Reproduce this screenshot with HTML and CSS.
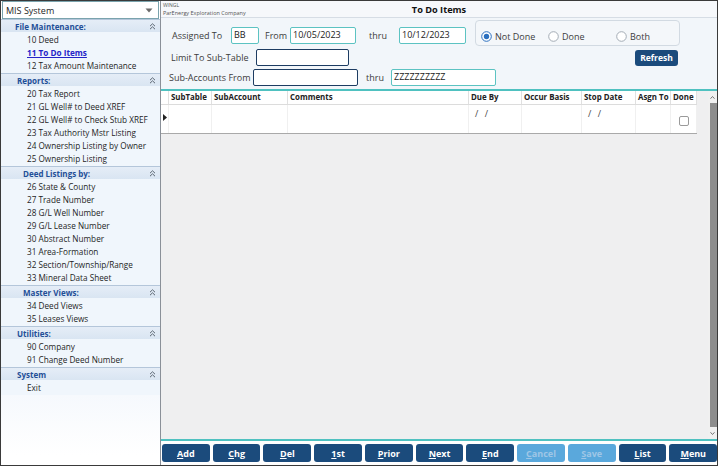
FILE: index.html
```html
<!DOCTYPE html>
<html>
<head>
<meta charset="utf-8">
<link rel="stylesheet" href="styles.css">
</head>
<body>
<aside class="sidebar">
  <div class="dropdown">
    <span>MIS System</span>
    <svg class="dd-arrow" width="8" height="5" viewBox="0 0 8 5"><path d="M0.5 0.5 L7.5 0.5 L4 4.5 Z" fill="#6b6b6b"/></svg>
  </div>
  <section class="grp">
    <div class="grp-h"><span>File Maintenance:</span><svg class="chev" width="7" height="7" viewBox="0 0 7 7"><path d="M1 3.2 L3.5 0.8 L6 3.2 M1 6.2 L3.5 3.8 L6 6.2" fill="none" stroke="#5a6470" stroke-width="1"/></svg></div>
    <ul>
      <li>10 Deed</li>
      <li class="active">11 To Do Items</li>
      <li>12 Tax Amount Maintenance</li>
    </ul>
  </section>
  <section class="grp">
    <div class="grp-h h2"><span>Reports:</span><svg class="chev" width="7" height="7" viewBox="0 0 7 7"><path d="M1 3.2 L3.5 0.8 L6 3.2 M1 6.2 L3.5 3.8 L6 6.2" fill="none" stroke="#5a6470" stroke-width="1"/></svg></div>
    <ul>
      <li>20 Tax Report</li>
      <li>21 GL Well# to Deed XREF</li>
      <li>22 GL Well# to Check Stub XREF</li>
      <li>23 Tax Authority Mstr Listing</li>
      <li>24 Ownership Listing by Owner</li>
      <li>25 Ownership Listing</li>
    </ul>
  </section>
  <section class="grp">
    <div class="grp-h sub"><span>Deed Listings by:</span><svg class="chev" width="7" height="7" viewBox="0 0 7 7"><path d="M1 3.2 L3.5 0.8 L6 3.2 M1 6.2 L3.5 3.8 L6 6.2" fill="none" stroke="#5a6470" stroke-width="1"/></svg></div>
    <ul>
      <li>26 State &amp; County</li>
      <li>27 Trade Number</li>
      <li>28 G/L Well Number</li>
      <li>29 G/L Lease Number</li>
      <li>30 Abstract Number</li>
      <li>31 Area-Formation</li>
      <li>32 Section/Township/Range</li>
      <li>33 Mineral Data Sheet</li>
    </ul>
  </section>
  <section class="grp">
    <div class="grp-h sub"><span>Master Views:</span><svg class="chev" width="7" height="7" viewBox="0 0 7 7"><path d="M1 3.2 L3.5 0.8 L6 3.2 M1 6.2 L3.5 3.8 L6 6.2" fill="none" stroke="#5a6470" stroke-width="1"/></svg></div>
    <ul>
      <li>34 Deed Views</li>
      <li>35 Leases Views</li>
    </ul>
  </section>
  <section class="grp">
    <div class="grp-h h2"><span>Utilities:</span><svg class="chev" width="7" height="7" viewBox="0 0 7 7"><path d="M1 3.2 L3.5 0.8 L6 3.2 M1 6.2 L3.5 3.8 L6 6.2" fill="none" stroke="#5a6470" stroke-width="1"/></svg></div>
    <ul>
      <li>90 Company</li>
      <li>91 Change Deed Number</li>
    </ul>
  </section>
  <section class="grp">
    <div class="grp-h h2"><span>System</span><svg class="chev" width="7" height="7" viewBox="0 0 7 7"><path d="M1 3.2 L3.5 0.8 L6 3.2 M1 6.2 L3.5 3.8 L6 6.2" fill="none" stroke="#5a6470" stroke-width="1"/></svg></div>
    <ul>
      <li>Exit</li>
    </ul>
  </section>
  <div class="side-fill"></div>
</aside>

<main class="main">
  <header class="titlebar">
    <div class="company">
      <div class="co-code">WINGL</div>
      <div class="co-name">ParEnergy Exploration Company</div>
    </div>
    <div class="title">To Do Items</div>
    <div></div>
  </header>

  <div class="filters">
    <div class="frow r1">
      <label class="lbl l-assigned">Assigned To</label>
      <div class="inp teal w-bb">BB</div>
      <label class="lbl l-from">From</label>
      <div class="inp teal w-date1">10/05/2023</div>
      <label class="lbl l-thru1">thru</label>
      <div class="inp teal w-date2">10/12/2023</div>
    </div>
    <div class="radios">
      <span class="radio r-not"><svg width="11" height="11" viewBox="0 0 11 11"><circle cx="5.5" cy="5.5" r="4.8" fill="#fff" stroke="#2a6fbf" stroke-width="1"/><circle cx="5.5" cy="5.5" r="2.7" fill="#2a6fbf"/></svg>Not Done</span>
      <span class="radio r-done"><svg width="11" height="11" viewBox="0 0 11 11"><circle cx="5.5" cy="5.5" r="4.8" fill="#fff" stroke="#a3acb5" stroke-width="1"/></svg>Done</span>
      <span class="radio r-both"><svg width="11" height="11" viewBox="0 0 11 11"><circle cx="5.5" cy="5.5" r="4.8" fill="#fff" stroke="#a3acb5" stroke-width="1"/></svg>Both</span>
    </div>
    <div class="frow r2">
      <label class="lbl l-limit">Limit To Sub-Table</label>
      <div class="inp navy w-sub"></div>
    </div>
    <div class="refresh-cell"><button class="refresh">Refresh</button></div>
    <div class="frow r3">
      <label class="lbl l-subacc">Sub-Accounts From</label>
      <div class="inp navy w-acc"></div>
      <label class="lbl l-thru2">thru</label>
      <div class="inp teal w-acc">ZZZZZZZZZZ</div>
    </div>
  </div>

  <div class="gridwrap">
    <div class="table">
      <div class="trow thead">
        <div class="c"></div>
        <div class="c">SubTable</div>
        <div class="c">SubAccount</div>
        <div class="c">Comments</div>
        <div class="c">Due By</div>
        <div class="c">Occur Basis</div>
        <div class="c">Stop Date</div>
        <div class="c">Asgn To</div>
        <div class="c">Done</div>
      </div>
      <div class="trow tdata">
        <div class="c ind"><svg width="4" height="7" viewBox="0 0 4 7"><path d="M0 0 L4 3.5 L0 7 Z" fill="#222"/></svg></div>
        <div class="c"></div>
        <div class="c"></div>
        <div class="c"></div>
        <div class="c date">/ /</div>
        <div class="c"></div>
        <div class="c date">/ /</div>
        <div class="c"></div>
        <div class="c chk"><span class="cb"></span></div>
      </div>
    </div>
    <div class="gap-fill"></div>
    <div class="vscroll">
      <div class="sb-arrow"><svg width="5" height="3" viewBox="0 0 5 3"><path d="M0.5 2.7 L2.5 0.5 L4.5 2.7" fill="none" stroke="#666" stroke-width="0.9"/></svg></div>
      <div class="sb-thumb"></div>
      <div class="sb-arrow down"><svg width="5" height="3" viewBox="0 0 5 3"><path d="M0.5 0.3 L2.5 2.5 L4.5 0.3" fill="none" stroke="#666" stroke-width="0.9"/></svg></div>
    </div>
  </div>

  <footer class="buttons">
    <button class="btn"><u>A</u>dd</button>
    <button class="btn"><u>C</u>hg</button>
    <button class="btn"><u>D</u>el</button>
    <button class="btn"><u>1</u>st</button>
    <button class="btn"><u>P</u>rior</button>
    <button class="btn"><u>N</u>ext</button>
    <button class="btn"><u>E</u>nd</button>
    <button class="btn disabled"><u>C</u>ancel</button>
    <button class="btn disabled"><u>S</u>ave</button>
    <button class="btn"><u>L</u>ist</button>
    <button class="btn"><u>M</u>enu</button>
  </footer>
</main>
</body>
</html>
```
FILE: styles.css
```css
* { box-sizing: border-box; margin: 0; padding: 0; }
html, body { width: 718px; height: 466px; overflow: hidden; }
body {
  border: 1px solid #3a3a3a;
  display: flex;
  font-family: "Open Sans", "Noto Sans", sans-serif;
  color: #222;
  background: #fff;
}

/* Sidebar */
.sidebar {
  width: 160px;
  border-right: 1px solid #8a9098;
  display: flex;
  flex-direction: column;
  background: #fff;
}
.dropdown {
  height: 18px;
  margin: 0 1px;
  border: 1px solid #7aa3ad;
  background: #fff;
  display: flex;
  align-items: center;
  justify-content: space-between;
  padding: 0 5px 0 3px;
  font-size: 9px;
  color: #1e1e1e;
}
.dd-arrow { display: block; }
.grp-h {
  height: 13px;
  border-top: 1px solid #b4c6da;
  background: linear-gradient(#e5edf7, #d9e5f2);
  display: flex;
  align-items: center;
  justify-content: space-between;
  padding: 0 4px 0 14px;
  font-size: 8px;
  font-weight: 700;
  color: #1f4f98;
}
.grp-h.h2 { padding-left: 16px; }
.grp-h.sub { padding-left: 22px; }
.chev { display: block; }
.grp ul {
  list-style: none;
  background: #f0f6fc;
  padding: 1px 0 1px;
}
.grp li {
  height: 13px;
  line-height: 13px;
  padding-left: 26px;
  font-size: 8.2px;
  color: #1e1e1e;
  white-space: nowrap;
}
.grp li.active {
  color: #2424c8;
  font-weight: 700;
  text-decoration: underline;
}
.side-fill { flex: 1; background: linear-gradient(#f6f9fd, #fff 60px); }

/* Main */
.main {
  flex: 1;
  display: flex;
  flex-direction: column;
  background: #f2f6fa;
  min-width: 0;
}
.titlebar {
  height: 17px;
  border-bottom: 1px solid #d6dde5;
  background: #f6f8fb;
  display: grid;
  grid-template-columns: 1fr auto 1fr;
  align-items: center;
}
.company { padding-left: 2px; color: #555; line-height: 6px; }
.co-code { font-size: 5px; }
.co-name { font-size: 5.5px; margin-top: 2px; }
.title { font-size: 9.2px; font-weight: 700; color: #111; }

.filters {
  display: grid;
  grid-template-columns: 306px 1fr;
  grid-template-rows: 26px 17px 17px;
  row-gap: 3px;
  padding: 2px 0 3px 8px;
}
.frow { display: flex; align-items: center; }
.r1 { grid-column: 1; grid-row: 1; align-items: flex-end; padding-bottom: 2px; }
.r2 { grid-column: 1; grid-row: 2; }
.r3 { grid-column: 1 / 3; grid-row: 3; }
.lbl { font-size: 9px; color: #3c3c3c; white-space: nowrap; }
.r1 .lbl { height: 17px; line-height: 17px; }
.l-assigned { margin-left: 3px; width: 59px; }
.l-from { margin-left: 6px; width: 25px; }
.l-thru1 { margin-left: 13px; width: 30px; }
.l-limit { margin-left: 2px; width: 85px; }
.l-subacc { width: 84px; }
.l-thru2 { margin-left: 8px; width: 25px; }
.inp {
  height: 17px;
  background: #fff;
  border-radius: 2px;
  font-size: 9px;
  line-height: 14px;
  padding-left: 2px;
  color: #1a1a1a;
}
.inp.teal { border: 1.5px solid #5cc3c2; }
.inp.navy { border: 1.5px solid #1d3c62; }
.w-bb { width: 28px; }
.w-date1 { width: 66px; }
.w-date2 { width: 67px; }
.w-sub { width: 93px; }
.w-acc { width: 105px; }

.radios {
  grid-column: 2;
  grid-row: 1;
  width: 205px;
  border: 1px solid #d2dae2;
  border-radius: 4px;
  background: #f4f7fa;
  display: flex;
  align-items: center;
  padding: 6px 0 0 5px;
  font-size: 9px;
  color: #3c3c3c;
}
.radio { display: flex; align-items: center; gap: 3px; }
.radio svg { display: block; }
.r-not { width: 67px; }
.r-done { width: 68px; }
.refresh-cell { grid-column: 2; grid-row: 2; display: flex; align-items: center; }
.refresh {
  margin-left: 160px;
  width: 43px;
  height: 16px;
  border: none;
  border-radius: 3px;
  background: #1b4b7c;
  color: #fff;
  font-family: inherit;
  font-size: 8.5px;
  font-weight: 700;
}

/* Grid */
.gridwrap {
  flex: 1;
  display: flex;
  background: #efeff0;
  border-top: 2px solid #4fc1c0;
  border-bottom: 2px solid #4fc1c0;
  min-height: 0;
}
.table { width: 536px; align-self: flex-start; }
.trow {
  display: grid;
  grid-template-columns: 8px 43px 76px 181px 53px 60px 54px 35px 26px;
  background: #fff;
}
.thead { height: 14px; border-bottom: 1px solid #dcdcdc; }
.thead .c {
  border-right: 1px solid #e0e0e0;
  font-size: 7.9px;
  font-weight: 700;
  line-height: 13px;
  padding-left: 2px;
  color: #222;
  white-space: nowrap;
}
.tdata { height: 29px; border-bottom: 1px solid #a9a9a9; }
.tdata .c { border-right: 1px solid #f0f0f0; }
.tdata .ind { display: flex; align-items: center; padding-left: 2px; }
.tdata .ind svg { display: block; margin-top: -4px; }
.tdata .date { font-size: 9px; color: #444; padding: 2px 0 0 6px; word-spacing: 4px; }
.tdata .chk { display: flex; justify-content: center; align-items: center; padding: 4px 0 0 1px; }
.cb {
  width: 10px;
  height: 10px;
  border: 1px solid #9a9a9a;
  border-radius: 2px;
  background: #fff;
}
.gap-fill { flex: 1; }
.vscroll {
  width: 9px;
  display: flex;
  flex-direction: column;
  background: #f0f0f0;
}
.sb-arrow { height: 12px; display: flex; align-items: center; justify-content: center; }
.sb-arrow svg { display: block; }
.sb-thumb { flex: 1; background: #8d8d8d; margin: 0 0 0 2px; }

/* Buttons */
.buttons {
  height: 24px;
  display: flex;
  gap: 3px;
  padding: 3px 0 3px 1px;
  background: #fff;
}
.btn {
  flex: 1;
  height: 18px;
  border: none;
  border-radius: 3px;
  background: #1b4b7c;
  color: #fff;
  font-family: inherit;
  font-size: 9px;
  font-weight: 700;
}
.btn u { text-decoration-thickness: 1px; text-underline-offset: 1px; }
.btn.disabled { background: #5aa8dc; color: #9fc6e6; }
```
